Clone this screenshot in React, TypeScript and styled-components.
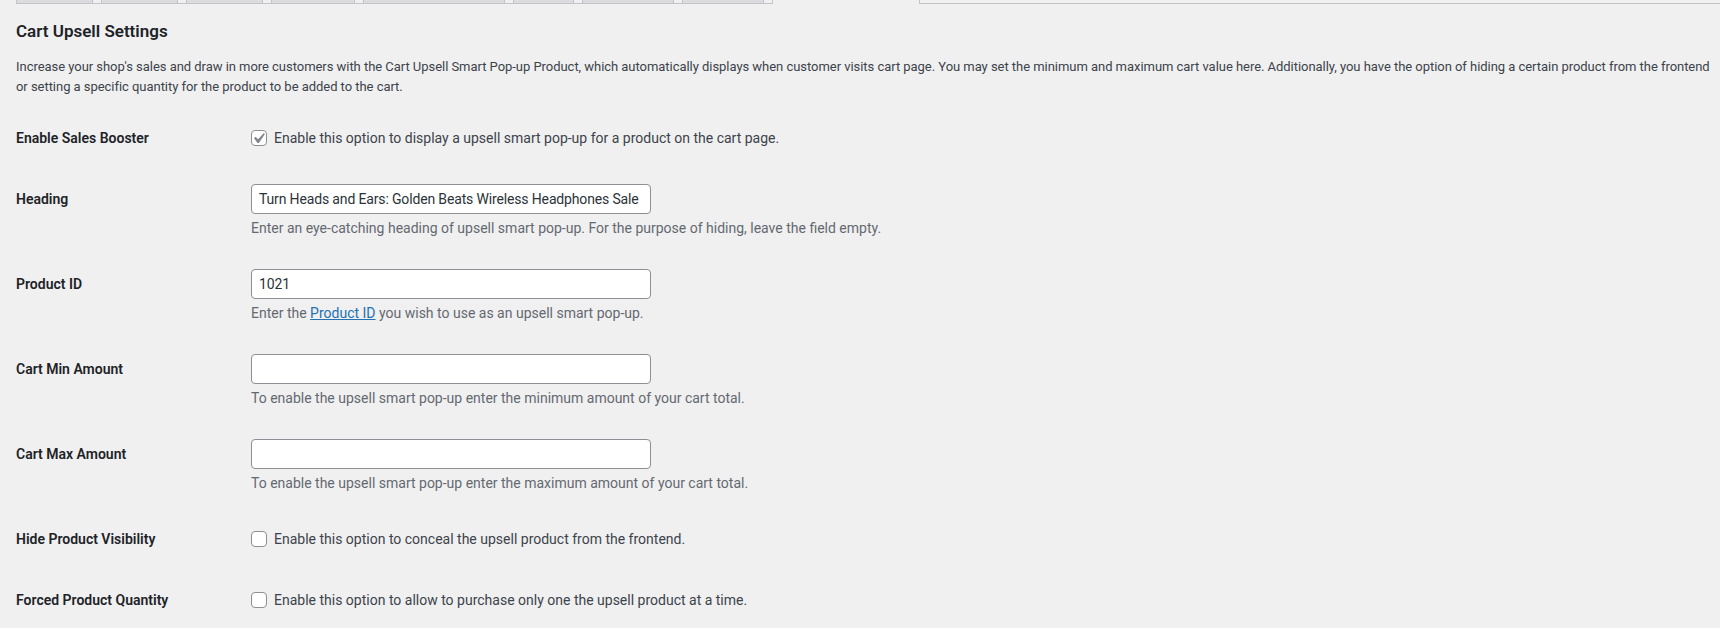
import React from "react";
import styled, { createGlobalStyle } from "styled-components";

const GlobalStyle = createGlobalStyle`
  html, body { margin: 0; padding: 0; background: #f0f0f1; }
  body {
    font-family: Roboto, "Open Sans", "Liberation Sans", sans-serif;
    color: #3c434a;
    font-size: 13px;
  }
  * { box-sizing: border-box; }
`;

const Page = styled.div`
  width: 1720px;
  height: 628px;
  overflow: hidden;
  padding-left: 16px;
`;

const TopStrip = styled.div`
  display: flex;
  height: 4px;
`;

const TabWrapper = styled.nav`
  display: flex;
  gap: 8px;
  padding-right: 8px;
  height: 4px;
  border-bottom: 1px solid #c3c4c7;
  border-right: 1px solid #c3c4c7;
`;

const Tab = styled.span<{ $w: number }>`
  display: block;
  width: ${(p) => p.$w}px;
  height: 3px;
  background: #dcdcde;
  border-left: 1px solid #c3c4c7;
  border-right: 1px solid #c3c4c7;
`;

const SidePanel = styled.div`
  flex: 1;
  margin-left: 146px;
  height: 4px;
  border-left: 1px solid #c3c4c7;
  border-bottom: 1px solid #c3c4c7;
`;

const Title = styled.h2`
  margin: 16px 0 0;
  font-size: 17px;
  line-height: 22px;
  font-weight: 600;
  color: #1d2327;
`;

const Intro = styled.p`
  margin: 15px 0 0;
  font-size: 13px;
  line-height: 19.5px;
  letter-spacing: -0.04px;
  color: #3c434a;
  white-space: nowrap;
`;

const Form = styled.div`
  margin-top: 12px;
  display: flex;
  flex-direction: column;
`;

const Row = styled.div`
  display: grid;
  grid-template-columns: 235px 1fr;
`;

const Label = styled.div`
  padding-top: 21px;
  font-size: 14px;
  line-height: 18px;
  font-weight: 600;
  color: #1d2327;
`;

const Field = styled.div<{ $check?: boolean }>`
  padding: ${(p) => (p.$check ? "21px 0 22px" : "15px 0")};
`;

const CheckLine = styled.label`
  display: flex;
  align-items: center;
  gap: 7px;
  font-size: 14px;
  line-height: 18px;
  color: #3c434a;
`;

const Box = styled.span`
  display: flex;
  width: 16px;
  height: 16px;
  flex: none;
  background: #fff;
  border: 1px solid #8c8f94;
  border-radius: 4px;
`;

const TextInput = styled.input`
  display: block;
  width: 400px;
  height: 30px;
  margin: 0;
  padding: 0 7px;
  background: #fff;
  border: 1px solid #8c8f94;
  border-radius: 4px;
  font-family: inherit;
  font-size: 14px;
  letter-spacing: -0.15px;
  color: #2c3338;
  outline: none;
`;

const Description = styled.p`
  margin: 4px 0 0;
  font-size: 14px;
  line-height: 21px;
  color: #646970;
`;

const Link = styled.a`
  color: #2271b1;
  text-decoration: underline;
`;

const tabs = [77, 77, 77, 84, 142, 61, 92, 82];

function Checkbox({ checked }: { checked?: boolean }) {
  return (
    <Box>
      {checked && (
        <svg width="14" height="14" viewBox="3.81 2.857 13.33 13.33">
          <path
            d="M14.83 4.89l1.34.94-5.81 8.38H9.02L5.78 9.67l1.34-1.25 2.57 2.4z"
            fill="#80868c"
          />
        </svg>
      )}
    </Box>
  );
}

function CheckRow({ label, text, checked }: { label: string; text: string; checked?: boolean }) {
  return (
    <Row>
      <Label>{label}</Label>
      <Field $check>
        <CheckLine>
          <Checkbox checked={checked} />
          {text}
        </CheckLine>
      </Field>
    </Row>
  );
}

function InputRow({
  label,
  value,
  children,
}: {
  label: string;
  value: string;
  children: React.ReactNode;
}) {
  return (
    <Row>
      <Label>{label}</Label>
      <Field>
        <TextInput type="text" defaultValue={value} />
        <Description>{children}</Description>
      </Field>
    </Row>
  );
}

export default function App() {
  return (
    <>
      <GlobalStyle />
      <Page>
        <TopStrip>
          <TabWrapper>
            {tabs.map((w, i) => (
              <Tab key={i} $w={w} />
            ))}
          </TabWrapper>
          <SidePanel />
        </TopStrip>
        <Title>Cart Upsell Settings</Title>
        <Intro>
          Increase your shop's sales and draw in more customers with the Cart Upsell Smart Pop-up Product, which
          automatically displays when customer visits cart page. You may set the minimum and maximum cart value here.
          Additionally, you have the option of hiding a certain product from the frontend
          <br />
          or setting a specific quantity for the product to be added to the cart.
        </Intro>
        <Form>
          <CheckRow
            label="Enable Sales Booster"
            checked
            text="Enable this option to display a upsell smart pop-up for a product on the cart page."
          />
          <InputRow label="Heading" value="Turn Heads and Ears: Golden Beats Wireless Headphones Sale">
            Enter an eye-catching heading of upsell smart pop-up. For the purpose of hiding, leave the field empty.
          </InputRow>
          <InputRow label="Product ID" value="1021">
            Enter the <Link href="#">Product ID</Link> you wish to use as an upsell smart pop-up.
          </InputRow>
          <InputRow label="Cart Min Amount" value="">
            To enable the upsell smart pop-up enter the minimum amount of your cart total.
          </InputRow>
          <InputRow label="Cart Max Amount" value="">
            To enable the upsell smart pop-up enter the maximum amount of your cart total.
          </InputRow>
          <CheckRow
            label="Hide Product Visibility"
            text="Enable this option to conceal the upsell product from the frontend."
          />
          <CheckRow
            label="Forced Product Quantity"
            text="Enable this option to allow to purchase only one the upsell product at a time."
          />
        </Form>
      </Page>
    </>
  );
}
